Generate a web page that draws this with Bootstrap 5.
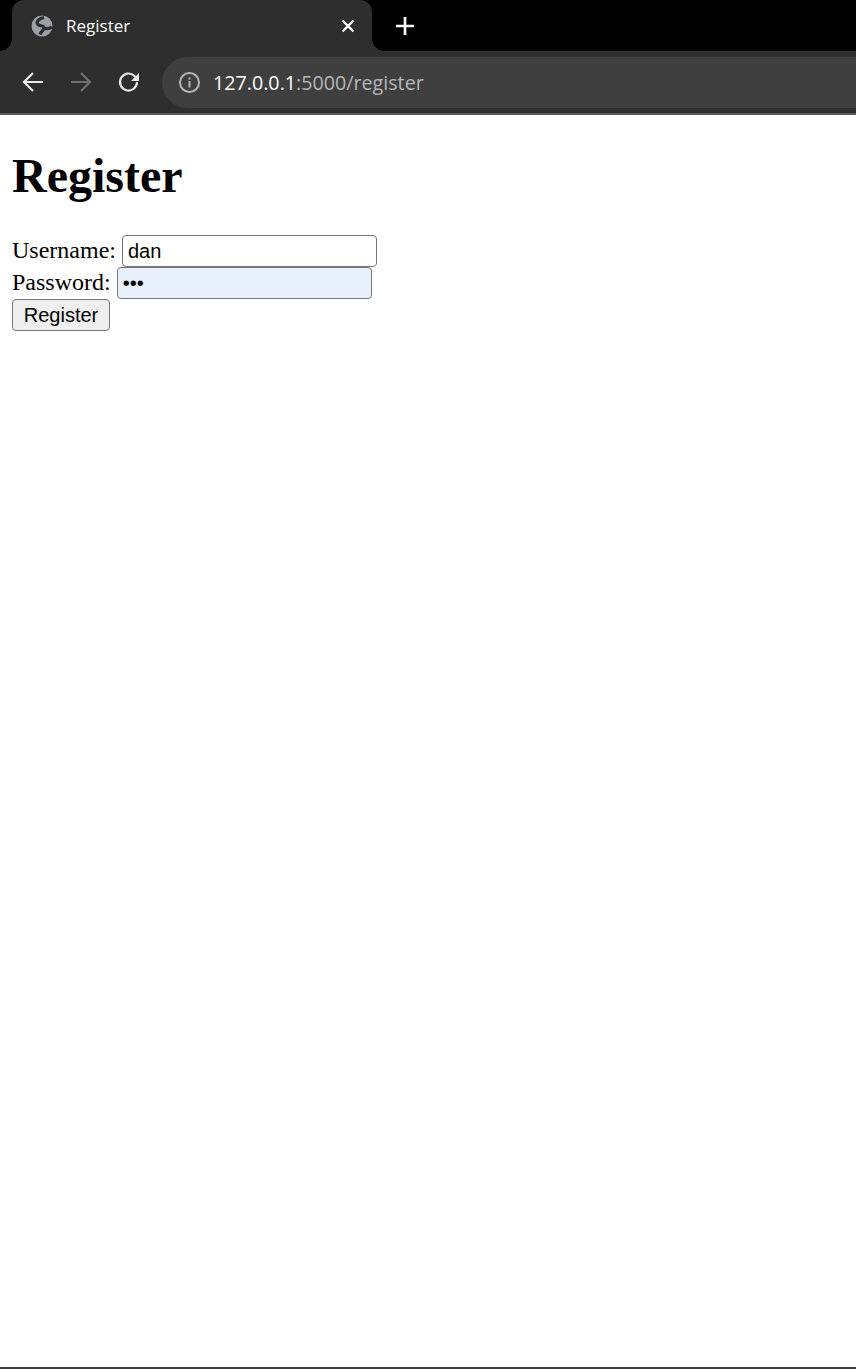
<!DOCTYPE html>
<html lang="en">
<head>
    <meta charset="UTF-8">
    <meta content="width=device-width, initial-scale=1.0" name="viewport">
    <title>Register</title>
    <link href="https://cdn.jsdelivr.net/npm/bootstrap@5.3.0/dist/css/bootstrap.min.css" rel="stylesheet">
    <style>
        html, body { height: 100%; }
        body { background: #fff; color: #000; font-family: "Liberation Serif", serif; font-size: 24px; overflow: hidden; }
        .shell { height: 1369px; border-bottom: 2px solid #3c3c3c; }
        .tabstrip { height: 51px; background: #000; padding-left: 12px; }
        .tab-item { width: 360px; height: 51px; background: #2e2e2e; border-radius: 12px 12px 0 0; padding: 0 17px 0 18px; position: relative; color: #fff; font-family: "Open Sans", sans-serif; font-size: 17px; }
        .tab-item::before, .tab-item::after { content: ""; position: absolute; bottom: 0; width: 12px; height: 12px; }
        .tab-item::before { left: -12px; background: radial-gradient(circle at 0 0, #000 11.5px, #2e2e2e 12px); }
        .tab-item::after { right: -12px; background: radial-gradient(circle at 100% 0, #000 11.5px, #2e2e2e 12px); }
        .tab-title { margin-left: 12px; }
        .newtab { margin-left: 23px; }
        .toolbar { height: 64px; background: #2e2e2e; border-bottom: 2px solid #5a5a5a; padding-left: 21px; }
        .tool-btn { width: 24px; height: 24px; margin-right: 24px; }
        .tool-btn:last-of-type { margin-right: 21px; }
        .omnibox { height: 51px; margin-top: 6px; margin-bottom: 5px; background: #3f3f3f; border-radius: 26px 0 0 26px; padding-left: 16px; font-family: "Open Sans", sans-serif; font-size: 19.7px; color: #b4b7ba; }
        .url-host { color: #fff; }
        .url-text { margin-left: 12px; }
        .page-body { padding: 33px 12px 0; }
        .page-title { font-family: "Liberation Serif", serif; font-size: 48px; font-weight: 700; line-height: 55px; margin: 0 0 32px; }
        .form-line { height: 32px; gap: 6px; line-height: 32px; }
        .form-line label { margin-top: -2px; }
        .plain-input { width: 255px; height: 32px; padding: 1px 5px; border: 1.5px solid #767676; border-radius: 4px; background: #fff; color: #000; font-family: "Liberation Sans", sans-serif; font-size: 20px; outline: 0; }
        .plain-input.filled { background: #e8f0fe; }
        .plain-btn { width: 98px; height: 32px; padding: 0; border: 1.5px solid #767676; border-radius: 4px; background: #efefef; color: #000; font-family: "Liberation Sans", sans-serif; font-size: 20px; line-height: 24px; }
    </style>
</head>
<body>
<div class="shell d-flex flex-column">
    <div class="tabstrip d-flex align-items-center">
        <div class="tab-item d-flex align-items-center">
            <svg width="24" height="24" viewBox="0 0 24 24">
                <circle cx="12" cy="12" r="10.500" fill="#9aa0a6"/>
                <path d="M14 3.500C9 4.500 5.500 8 8 10.500c2 2 6 .5 6 3.500 0 2-3 3-4 6.500M15 14.500c3 .5 5 0 7-1.500" stroke="#2e2e2e" stroke-width="3.200" fill="none"/>
            </svg>
            <span class="tab-title">Register</span>
            <svg class="ms-auto" width="14" height="14" viewBox="0 0 14 14">
                <path d="M1.500 1.500l11 11M12.500 1.500l-11 11" stroke="#fff" stroke-width="2.400" fill="none"/>
            </svg>
        </div>
        <svg class="newtab" width="20" height="20" viewBox="0 0 20 20">
            <path d="M10 1v18M1 10h18" stroke="#fff" stroke-width="2.700" fill="none"/>
        </svg>
    </div>
    <div class="toolbar d-flex">
        <svg class="tool-btn align-self-center" viewBox="0 0 24 24">
            <path d="M22 12H4M12 3l-9 9 9 9" stroke="#e8eaed" stroke-width="2.200" fill="none"/>
        </svg>
        <svg class="tool-btn align-self-center" viewBox="0 0 24 24">
            <path d="M2 12h18M12 3l9 9-9 9" stroke="#6f7072" stroke-width="2.200" fill="none"/>
        </svg>
        <svg class="tool-btn align-self-center" viewBox="0 0 24 24">
            <path d="M20 12a8.500 8.500 0 1 1-2.500-6L21 9.500" stroke="#e8eaed" stroke-width="2.200" fill="none"/>
            <path d="M22 3v8h-8z" fill="#e8eaed"/>
        </svg>
        <div class="omnibox flex-grow-1 d-flex align-items-center">
            <svg width="23" height="23" viewBox="0 0 23 23">
                <circle cx="11.500" cy="11.500" r="9.500" stroke="#b4b7ba" stroke-width="2" fill="none"/>
                <path d="M11.500 10v6.500M11.500 6.500v2" stroke="#b4b7ba" stroke-width="2" fill="none"/>
            </svg>
            <span class="url-text"><span class="url-host">127.0.0.1</span>:5000/register</span>
        </div>
    </div>
    <div class="page-body flex-grow-1">
        <h1 class="page-title">Register</h1>
        <form>
            <div class="form-line d-flex align-items-center">
                <label for="username">Username:</label>
                <input class="plain-input" id="username" type="text" value="dan">
            </div>
            <div class="form-line d-flex align-items-center">
                <label for="password">Password:</label>
                <input class="plain-input filled" id="password" type="password" value="abc">
            </div>
            <div class="form-line d-flex align-items-center">
                <button class="plain-btn" type="button">Register</button>
            </div>
        </form>
    </div>
</div>
<script src="https://cdn.jsdelivr.net/npm/bootstrap@5.3.0/dist/js/bootstrap.bundle.min.js"></script>
</body>
</html>
